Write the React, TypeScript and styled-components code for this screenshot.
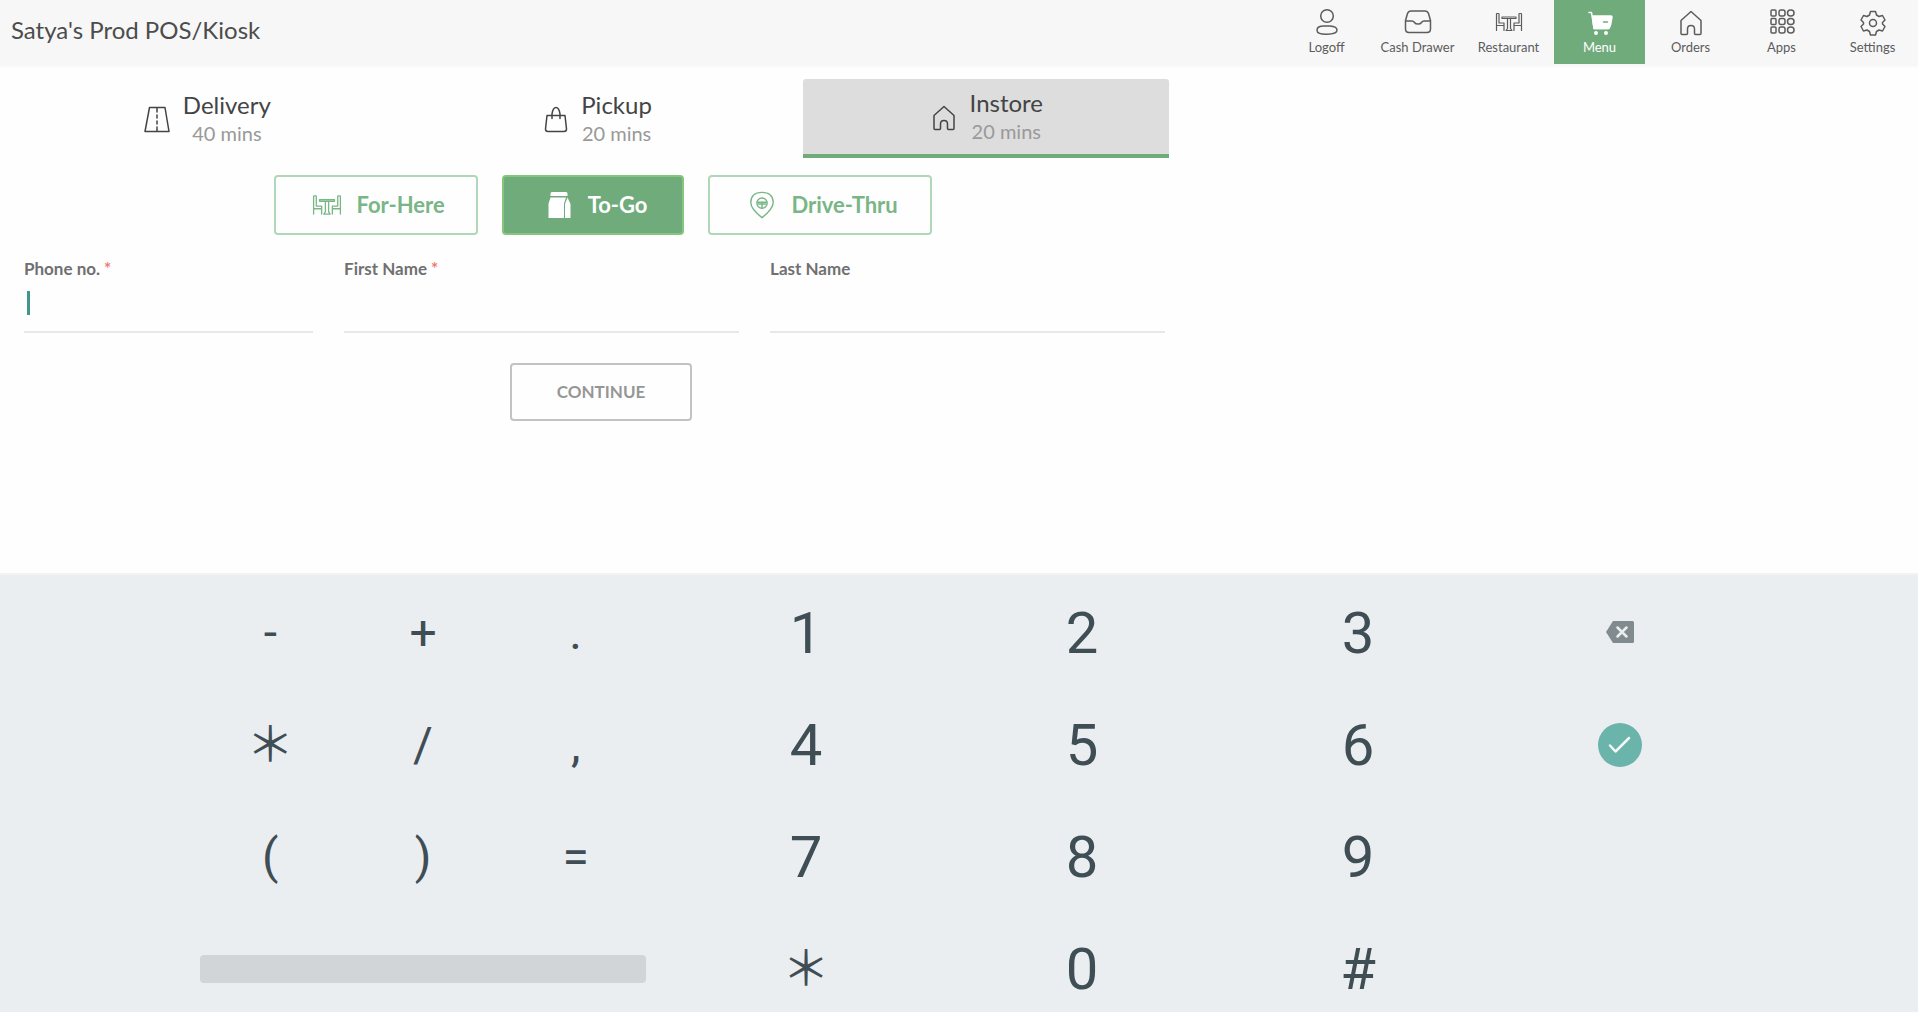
import React from "react";
import styled, { createGlobalStyle, css } from "styled-components";

const green = "#70ab7b";

const GlobalStyle = createGlobalStyle`
  *, *::before, *::after { box-sizing: border-box; }
  body { margin: 0; background: #fefefe; font-family: Lato, "Liberation Sans", sans-serif; color: #4c4c4c; }
  button, input { font: inherit; color: inherit; }
  button { cursor: pointer; }
`;

const Shell = styled.div`
  display: flex;
  flex-direction: column;
  height: 100vh;
  overflow: hidden;
`;

const Header = styled.header`
  display: flex;
  align-items: flex-start;
  justify-content: space-between;
  height: 65px;
  flex: none;
  background: #f7f7f7;
  box-shadow: 0 1px 3px #f4f4f4;
`;

const Title = styled.h1`
  margin: 0;
  padding: 15px 11px;
  font-size: 24px;
  line-height: 30px;
  font-weight: 400;
`;

const Nav = styled.nav`
  display: flex;
`;

const NavLink = styled.a<{ $active?: boolean }>`
  display: flex;
  flex-direction: column;
  align-items: center;
  gap: 2px;
  width: 91px;
  height: 64px;
  padding-top: 8px;
  font-size: 13px;
  line-height: 18px;
  white-space: nowrap;
  text-decoration: none;
  color: ${(p) => (p.$active ? "#fff" : "#5c5c5c")};
  background: ${(p) => (p.$active ? green : "transparent")};
`;

const Icon = styled.svg<{ $size?: number; $stroke?: number }>`
  flex: none;
  width: ${(p) => p.$size ?? 28}px;
  height: ${(p) => p.$size ?? 28}px;
  fill: none;
  stroke: currentColor;
  stroke-width: ${(p) => p.$stroke ?? 1.5};
  stroke-linejoin: round;
  stroke-linecap: round;
`;

const Main = styled.main`
  flex: none;
  width: 62%;
  padding: 14px 0 152px;
`;

const Tabs = styled.div`
  display: grid;
  grid-template-columns: repeat(3, 1fr);
  gap: 24px;
  padding: 0 20px 0 24px;
`;

const Tab = styled.button<{ $active?: boolean }>`
  display: flex;
  align-items: center;
  justify-content: center;
  gap: 12px;
  height: 79px;
  padding: 0;
  border: 0;
  border-radius: 3px 3px 0 0;
  background: transparent;
  color: #444;
  ${(p) =>
    p.$active &&
    css`
      background: #dddddd;
      border-bottom: 4px solid ${green};
    `}
`;

const TabText = styled.span`
  display: flex;
  flex-direction: column;
  align-items: center;
  font-size: 24px;
  line-height: 29px;
`;

const TabTime = styled.span`
  font-size: 20px;
  color: #999;
`;

const Modes = styled.div`
  display: flex;
  justify-content: center;
  gap: 24px;
  padding: 17px 24px 0 41px;
`;

const ModeButton = styled.button<{ $active?: boolean; $width: number }>`
  display: flex;
  align-items: center;
  justify-content: center;
  gap: 14px;
  width: ${(p) => p.$width}px;
  height: 60px;
  padding: 0 0 1px 5px;
  border: 2px solid ${(p) => (p.$active ? "#86c67c" : "#b1d7b9")};
  border-radius: 4px;
  background: ${(p) => (p.$active ? green : "#fefefe")};
  color: ${(p) => (p.$active ? "#fff" : "#79b686")};
  font-size: 22px;
  font-weight: 700;
`;

const Form = styled.form`
  padding: 24px 24px 0;
`;

const Fields = styled.div`
  display: grid;
  grid-template-columns: 289fr 395fr 395fr;
  gap: 31px;
`;

const Field = styled.div`
  position: relative;
`;

const Label = styled.label`
  display: block;
  font-size: 17px;
  line-height: 20px;
  font-weight: 700;
  color: #707070;
`;

const Required = styled.span`
  margin-left: 4px;
  color: #ee7c70;
`;

const TextInput = styled.input`
  display: block;
  width: 100%;
  height: 54px;
  padding: 0 4px;
  border: 0;
  border-bottom: 2px solid #e8e8e8;
  outline: none;
  background: transparent;
  font-size: 20px;
`;

const Caret = styled.span`
  position: absolute;
  left: 3px;
  top: 32px;
  width: 3px;
  height: 24px;
  background: #43968b;
`;

const Submit = styled.div`
  display: flex;
  justify-content: center;
  padding: 30px 0 0 13px;
`;

const ContinueButton = styled.button`
  width: 182px;
  height: 58px;
  padding: 0 0 2px;
  border: 2px solid #c2c2c2;
  border-radius: 4px;
  background: #fefefe;
  color: #969696;
  font-size: 17px;
  font-weight: 700;
`;

const Keyboard = styled.section`
  flex: 1 0 auto;
  display: grid;
  grid-template-columns: 458fr 828fr 216fr;
  gap: 16px;
  padding: 2px 190px 0 194px;
  border-top: 2px solid #f1f3f4;
  background: #ebeef1;
  color: #3f4d55;
  font-family: Roboto, "Noto Sans CJK JP", sans-serif;
`;

const KeyGroup = styled.div<{ $columns: number }>`
  display: grid;
  grid-template-columns: repeat(${(p) => p.$columns}, 1fr);
  grid-auto-rows: 112px;
`;

const Key = styled.button<{ $large?: boolean }>`
  display: flex;
  align-items: center;
  justify-content: center;
  padding: 0;
  border: 0;
  background: transparent;
  font-size: ${(p) => (p.$large ? 58 : 48)}px;
  line-height: 64px;
`;

const SpaceKey = styled.button`
  grid-column: 1 / -1;
  align-self: center;
  height: 28px;
  margin: 0 6px;
  padding: 0;
  border: 0;
  border-radius: 4px;
  background: #d1d5d8;
`;

const TableIcon = ({ size = 28 }: { size?: number }) => (
  <Icon viewBox="0 0 28 28" $size={size} $stroke={1.2} aria-hidden>
    <path d="M1.500 22.500V6q0-.5.5-.5h1.500q.5 0 .5.5v9h5v7.500M1.500 17.500H9" />
    <path d="M26.500 22.500V6q0-.5-.5-.5h-1.500q-.5 0-.5.5v9h-5v7.500M26.500 17.500H19" />
    <path d="M7 9h14v1.500H7zM12.500 10.500v10l-1.500 2h6l-1.500-2v-10" />
  </Icon>
);

const HomeIcon = () => (
  <Icon viewBox="0 0 28 28" aria-hidden>
    <path d="M4 12.500 14 3.500l10 9v13q0 1-1 1h-4.500q-1 0-1-1V21q0-3.500-3.500-3.500T10.500 21v4.500q0 1-1 1H5q-1 0-1-1z" />
  </Icon>
);

const NAV = [
  {
    label: "Logoff",
    icon: (
      <Icon viewBox="0 0 28 28" aria-hidden>
        <circle cx="14" cy="8" r="6.300" />
        <path d="M11 18h6q7 .5 7 4.200T14 26.200 4 22.200 11 18z" />
      </Icon>
    ),
  },
  {
    label: "Cash Drawer",
    icon: (
      <Icon viewBox="0 0 28 28" aria-hidden>
        <path d="M1.500 12.500 3.500 5.500Q4.500 3 7 3h14q2.500 0 3.500 2.500l2 7V21q0 3.500-3.500 3.500H5Q1.500 24.500 1.500 21zM1.500 13H8q1.500 0 2.500 1.500t3.500 1.500 3.500-1.500T20 13h6.500" />
      </Icon>
    ),
  },
  { label: "Restaurant", icon: <TableIcon /> },
  {
    label: "Menu",
    active: true,
    icon: (
      <Icon viewBox="0 0 28 28" aria-hidden>
        <path d="M3 4.500h2.500l2.500 16h15" />
        <path d="M6.500 8h18.500q1 0 1 1l-1.500 8q-.5 3.500-3.500 3.500H8z" fill="currentColor" />
        <path d="M17.500 14h4" stroke={green} />
        <circle cx="10" cy="25" r="1.200" fill="currentColor" />
        <circle cx="20" cy="25" r="1.200" fill="currentColor" />
      </Icon>
    ),
  },
  { label: "Orders", icon: <HomeIcon /> },
  {
    label: "Apps",
    icon: (
      <Icon viewBox="0 0 28 28" aria-hidden>
        {[2, 10.500, 19].map((y) => (
          <React.Fragment key={y}>
            <rect x="3" y={y} width="5" height="6" rx="1" />
            <rect x="11" y={y} width="6" height="6" rx="2" />
            <rect x="19.500" y={y} width="6.500" height="6" rx="3" />
          </React.Fragment>
        ))}
      </Icon>
    ),
  },
  {
    label: "Settings",
    icon: (
      <Icon viewBox="0 0 28 28" aria-hidden>
        <path d="M11.500 3.500h5l1 3.500 2.500 1.500 3.500-1 2.500 4.500-2.500 2.500v1.500l2.500 2.500-2.500 4.500-3.500-1-2.500 1.500-1 3.500h-5l-1-3.500L8 22l-3.500 1L2 18.500 4.500 16v-1.500L2 12l2.500-4.500 3.500 1L10.500 7z" />
        <circle cx="14" cy="15" r="3.500" />
      </Icon>
    ),
  },
];

const SYMBOLS = ["-", "+", ".", "＊", "/", ",", "(", ")", "="];
const DIGITS = ["1", "2", "3", "4", "5", "6", "7", "8", "9", "＊", "0", "#"];

export default function App() {
  return (
    <Shell>
      <GlobalStyle />
      <Header>
        <Title>Satya's Prod POS/Kiosk</Title>
        <Nav>
          {NAV.map((item) => (
            <NavLink key={item.label} href="#" $active={item.active}>
              {item.icon}
              {item.label}
            </NavLink>
          ))}
        </Nav>
      </Header>

      <Main>
        <Tabs>
          <Tab type="button">
            <Icon viewBox="0 0 28 28" aria-hidden>
              <path d="M6.500 2.500h15.500l4 24h-24zM14 3v4M14 10v3M14 16v3M14 22v4" />
            </Icon>
            <TabText>
              Delivery
              <TabTime>40 mins</TabTime>
            </TabText>
          </Tab>
          <Tab type="button">
            <Icon viewBox="0 0 28 28" aria-hidden>
              <path d="M6 10.500h18l1.500 13.500q0 2.500-2.500 2.500H7Q4.500 26.500 4.500 24zM11 13.500V9Q12 2.500 15 2.500T19 9v4.500" />
            </Icon>
            <TabText>
              Pickup
              <TabTime>20 mins</TabTime>
            </TabText>
          </Tab>
          <Tab type="button" $active>
            <HomeIcon />
            <TabText>
              Instore
              <TabTime>20 mins</TabTime>
            </TabText>
          </Tab>
        </Tabs>

        <Modes>
          <ModeButton type="button" $width={204}>
            <TableIcon size={30} />
            For-Here
          </ModeButton>
          <ModeButton type="button" $width={182} $active>
            <Icon viewBox="0 0 30 30" $size={30} aria-hidden>
              <path d="M8 2h14q1.500 0 1.500 1.500V6h-17V3.500Q6.500 2 8 2zM6.500 7.500h15.500l-2 6V28H4.500V13.500z" fill="currentColor" stroke="none" />
              <path d="M23.500 7.500 26.500 14v14h-5.500V14z" fill="currentColor" stroke="none" />
            </Icon>
            To-Go
          </ModeButton>
          <ModeButton type="button" $width={224}>
            <Icon viewBox="0 0 32 32" $size={30} aria-hidden>
              <path d="M16 29.500Q4 20 4 13 4.500 2.500 16 2.500T28 13Q28 20 16 29.500z" />
              <circle cx="16" cy="14" r="5.500" />
              <path d="M11 13h10M16 14v5M12 15h8" />
            </Icon>
            Drive-Thru
          </ModeButton>
        </Modes>

        <Form onSubmit={(e) => e.preventDefault()}>
          <Fields>
            <Field>
              <Label htmlFor="phone">
                Phone no.<Required>*</Required>
              </Label>
              <TextInput id="phone" type="tel" />
              <Caret />
            </Field>
            <Field>
              <Label htmlFor="first">
                First Name<Required>*</Required>
              </Label>
              <TextInput id="first" />
            </Field>
            <Field>
              <Label htmlFor="last">Last Name</Label>
              <TextInput id="last" />
            </Field>
          </Fields>
          <Submit>
            <ContinueButton type="submit">CONTINUE</ContinueButton>
          </Submit>
        </Form>
      </Main>

      <Keyboard aria-label="Keypad">
        <KeyGroup $columns={3}>
          {SYMBOLS.map((s) => (
            <Key key={s} type="button">
              {s}
            </Key>
          ))}
          <SpaceKey type="button" aria-label="Space" />
        </KeyGroup>
        <KeyGroup $columns={3}>
          {DIGITS.map((d) => (
            <Key key={d} type="button" $large={d !== "＊"}>
              {d}
            </Key>
          ))}
        </KeyGroup>
        <KeyGroup $columns={1}>
          <Key type="button" aria-label="Backspace">
            <Icon viewBox="0 0 30 30" $size={30} aria-hidden>
              <path d="M8 3h19.500q1.500 0 1.500 1.500v19q0 1.500-1.500 1.500H8L1 14z" fill="#808a8f" stroke="none" />
              <path d="M12.500 9.500l9 9M21.500 9.500l-9 9" stroke="#ebeef1" strokeWidth="2.500" />
            </Icon>
          </Key>
          <Key type="button" aria-label="Done">
            <Icon viewBox="0 0 44 44" $size={44} $stroke={2.5} aria-hidden>
              <circle cx="22" cy="22" r="22" fill="#6bb4ab" stroke="none" />
              <path d="M12 22.500l5.500 6L31 15" stroke="#f2f8f7" />
            </Icon>
          </Key>
        </KeyGroup>
      </Keyboard>
    </Shell>
  );
}
